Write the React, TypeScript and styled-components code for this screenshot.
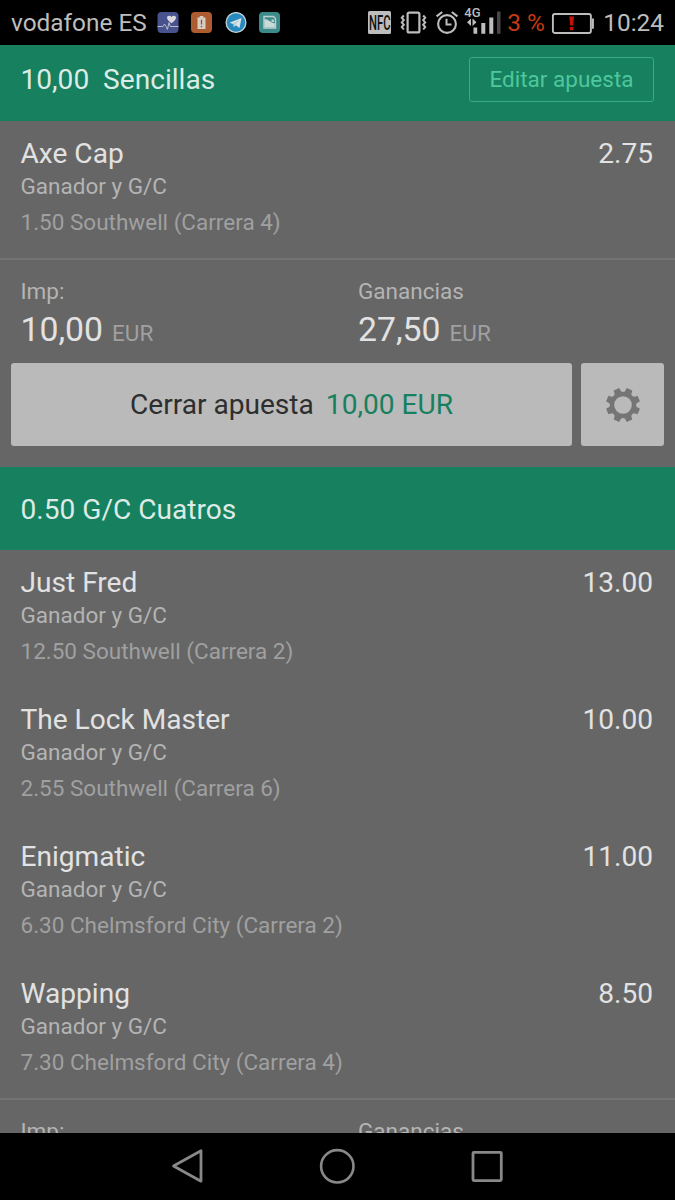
import React from 'react';
import styled, { createGlobalStyle } from 'styled-components';

const GlobalStyle = createGlobalStyle`
  * { box-sizing: border-box; }
  html, body { margin: 0; padding: 0; background: #000; }
  body { font-family: Roboto, "Liberation Sans", sans-serif; overflow: hidden; }
`;

const Screen = styled.div`
  display: flex;
  flex-direction: column;
  width: 675px;
  height: 1200px;
  overflow: hidden;
  background: #666;
`;

const StatusBar = styled.header`
  flex: none;
  display: flex;
  align-items: flex-start;
  justify-content: space-between;
  height: 45px;
  padding: 0 11px;
  background: #000;
  color: #bdbdbd;
`;

const StatusGroup = styled.div`
  display: flex;
  align-items: flex-start;
`;

const StatusText = styled.span<{ $color?: string; $gap?: number }>`
  font-size: 24.4px;
  line-height: 29px;
  margin-top: 8px;
  margin-left: ${(p) => p.$gap ?? 0}px;
  color: ${(p) => p.$color ?? '#bdbdbd'};
  white-space: pre;
`;

const StatusIcon = styled.svg<{ $top: number; $gap: number }>`
  flex: none;
  display: block;
  margin-top: ${(p) => p.$top}px;
  margin-left: ${(p) => p.$gap}px;
`;

const Content = styled.main`
  flex: 1;
  min-height: 0;
  overflow: hidden;
`;

const BetHeader = styled.div<{ $height: number; $top?: number; $bottom?: number }>`
  display: flex;
  align-items: center;
  justify-content: space-between;
  height: ${(p) => p.$height}px;
  padding: ${(p) => p.$top ?? 0}px 21px ${(p) => p.$bottom ?? 0}px 20.5px;
  background: #16805f;
`;

const BetTitle = styled.h2`
  margin: 0;
  font-size: 28.1px;
  line-height: 33px;
  font-weight: 400;
  color: #dcebe6;
  white-space: pre;
`;

const EditButton = styled.button`
  width: 185px;
  height: 45px;
  padding: 0;
  border: 1.5px solid #3aaa84;
  border-radius: 3px;
  background: transparent;
  font-family: inherit;
  font-size: 22.5px;
  line-height: 27px;
  color: #4fc79d;
`;

const Selection = styled.div`
  display: flex;
  justify-content: space-between;
  height: 137px;
  padding: 16px 22px 0 20.5px;
`;

const Name = styled.div`
  font-size: 28.1px;
  line-height: 33px;
  color: #e2e2e2;
`;

const Market = styled.div`
  margin-top: 3px;
  font-size: 22.5px;
  line-height: 27px;
  color: #b4b4b4;
`;

const EventName = styled.div`
  margin-top: 9px;
  font-size: 22.5px;
  line-height: 27px;
  color: #a0a0a0;
`;

const Odds = styled(Name)`
  text-align: right;
`;

const Stakes = styled.div`
  display: grid;
  grid-template-columns: 1fr 1fr;
  height: 105px;
  padding-top: 18px;
  border-top: 2px solid #737373;
`;

const Stake = styled.div`
  padding-left: 20.5px;
`;

const StakeLabel = styled.div`
  font-size: 22.5px;
  line-height: 27px;
  color: #b4b4b4;
`;

const StakeValue = styled.div`
  display: flex;
  align-items: baseline;
  gap: 9px;
  margin-top: 5px;
  font-size: 33.75px;
  line-height: 40px;
  color: #e2e2e2;
`;

const Currency = styled.span`
  font-size: 22.5px;
  color: #a0a0a0;
`;

const Actions = styled.div`
  display: flex;
  gap: 9px;
  height: 104px;
  padding: 0 11px 21px;
`;

const ActionButton = styled.button<{ $width?: number }>`
  display: flex;
  align-items: center;
  justify-content: center;
  gap: 12px;
  flex: ${(p) => (p.$width ? `0 0 ${p.$width}px` : '1')};
  padding: 0;
  border: 0;
  border-radius: 3px;
  background: #bababa;
  font-family: inherit;
  font-size: 28.1px;
  line-height: 33px;
  color: #2e2e2e;
`;

const Amount = styled.span`
  color: #16805f;
`;

const NavBar = styled.nav`
  flex: none;
  display: flex;
  align-items: flex-start;
  justify-content: center;
  gap: 110px;
  height: 67px;
  padding: 13px 1px 0 0;
  background: #000;
`;

interface Pick {
  name: string;
  odds: string;
  event: string;
}

const single: Pick = { name: 'Axe Cap', odds: '2.75', event: '1.50 Southwell (Carrera 4)' };

const fourfold: Pick[] = [
  { name: 'Just Fred', odds: '13.00', event: '12.50 Southwell (Carrera 2)' },
  { name: 'The Lock Master', odds: '10.00', event: '2.55 Southwell (Carrera 6)' },
  { name: 'Enigmatic', odds: '11.00', event: '6.30 Chelmsford City (Carrera 2)' },
  { name: 'Wapping', odds: '8.50', event: '7.30 Chelmsford City (Carrera 4)' },
];

function SelectionRow({ pick }: { pick: Pick }) {
  return (
    <Selection>
      <div>
        <Name>{pick.name}</Name>
        <Market>Ganador y G/C</Market>
        <EventName>{pick.event}</EventName>
      </div>
      <Odds>{pick.odds}</Odds>
    </Selection>
  );
}

function StakeCell({ label, value }: { label: string; value?: string }) {
  return (
    <Stake>
      <StakeLabel>{label}</StakeLabel>
      {value && (
        <StakeValue>
          {value}
          <Currency>EUR</Currency>
        </StakeValue>
      )}
    </Stake>
  );
}

function StakeSummary({ stake, returns }: { stake?: string; returns?: string }) {
  return (
    <Stakes>
      <StakeCell label="Imp:" value={stake} />
      <StakeCell label="Ganancias" value={returns} />
    </Stakes>
  );
}

// Eight teeth separated by rounded notches, around a circular hole.
function gearPath(): string {
  const point = (r: number, deg: number) => {
    const a = (deg * Math.PI) / 180;
    return `${(18 + r * Math.cos(a)).toFixed(2)} ${(18 + r * Math.sin(a)).toFixed(2)}`;
  };
  let d = '';
  for (let i = 0; i < 8; i++) {
    const c = 22.5 + i * 45;
    d += `${i ? 'L' : 'M'}${point(17.3, c - 10)}L${point(17.3, c + 10)}`;
    d += `L${point(15.6, c + 12)}A2.9 2.9 0 0 0 ${point(15.6, c + 33)}`;
  }
  return `${d}ZM18 9.2a8.8 8.8 0 1 0 0 17.6a8.8 8.8 0 1 0 0 -17.6Z`;
}

function GearIcon() {
  return (
    <svg width="36" height="36" viewBox="0 0 36 36">
      <path d={gearPath()} fill="#757575" fillRule="evenodd" />
    </svg>
  );
}

function NotificationIcons() {
  return (
    <>
      <StatusIcon $top={12} $gap={10.5} width="22" height="21" viewBox="0 0 22 21">
        <rect x="0.5" width="21" height="21" rx="4" fill="#48528c" />
        <path d="M14.5 11.2C11 8.8 10 7.2 10 5.6C10 3.4 13.2 2.9 14.5 5.1C15.8 2.9 19 3.4 19 5.6C19 7.2 18 8.8 14.5 11.2Z" fill="#d9d9df" />
        <path d="M0.5 14.5H6L7.5 12L9 14.5L10.4 17.5L12 10.5L13.3 14.5H21.5" fill="none" stroke="#b9bccb" strokeWidth="1" />
      </StatusIcon>
      <StatusIcon $top={12} $gap={12} width="21" height="21" viewBox="0 0 21 21">
        <rect width="21" height="21" rx="4" fill="#ad5b31" />
        <path d="M8.7 4h3.6v1.5h2.2v11.4h-8V5.5h2.2z" fill="#d8cdc5" />
        <path d="M10.5 7.7v4.8M10.5 13.8v1.5" stroke="#95502e" strokeWidth="1.3" />
      </StatusIcon>
      <StatusIcon $top={12} $gap={12.500} width="22" height="22" viewBox="0 0 22 22">
        <circle cx="11" cy="10.5" r="9.9" fill="#2789bd" stroke="#c6d3d9" strokeWidth="1.3" />
        <path d="M4.5 10.7L16.5 6L14.5 16L10.7 13.2L8.9 15L8.2 12Z" fill="#dbe3e7" />
        <path d="M8.2 12L14.3 7.8L9.7 12.5L8.9 15Z" fill="#9dbccc" />
      </StatusIcon>
      <StatusIcon $top={12} $gap={12.500} width="21" height="21" viewBox="0 0 21 21">
        <rect width="21" height="21" rx="4" fill="#3c8a89" />
        <path d="M5 4.5h9.500l2 2V16H5z" fill="none" stroke="#bcd2d1" strokeWidth="1.4" />
        <path d="M5.500 7.500C9 6.500 11 10.800 15.800 11.500V15.300H5.500Z" fill="#cbdad9" />
        <path d="M12.500 7.500h2.500v2.500h-2.500z" fill="#bcd2d1" />
      </StatusIcon>
    </>
  );
}

function SystemIcons() {
  return (
    <>
      <StatusIcon $top={11} $gap={0} width="23" height="23" viewBox="0 0 23 23">
        <rect width="23" height="23" rx="1.5" fill="#bdbdbd" />
        <text x="1" y="18.6" fontFamily="Roboto, sans-serif" fontSize="19.5" fontWeight="500" textLength="21.5" lengthAdjust="spacingAndGlyphs" fill="#111">NFC</text>
      </StatusIcon>
      <StatusIcon $top={11} $gap={9} width="27" height="23" viewBox="0 0 27 23">
        <rect x="7.6" y="1.6" width="11.8" height="19.8" rx="1.5" fill="none" stroke="#bdbdbd" strokeWidth="2.2" />
        <path d="M3.8 4.5L1.8 6.8L3.8 9.1L1.8 11.4L3.8 13.7L1.8 16L3.8 18.5M23.2 4.5L25.2 6.8L23.2 9.1L25.2 11.4L23.2 13.7L25.2 16L23.2 18.5" fill="none" stroke="#bdbdbd" strokeWidth="2" />
      </StatusIcon>
      <StatusIcon $top={10} $gap={8} width="24" height="25" viewBox="0 0 24 25">
        <circle cx="12" cy="14" r="8.9" fill="none" stroke="#bdbdbd" strokeWidth="2.1" />
        <path d="M11.500 8.700V14.500H16.500" fill="none" stroke="#bdbdbd" strokeWidth="2" />
        <path d="M1.600 6.400L7.200 2M16.800 2L22.400 6.400" stroke="#bdbdbd" strokeWidth="2.2" />
      </StatusIcon>
      <StatusIcon $top={6} $gap={5} width="38" height="29" viewBox="0 0 38 29">
        <text x="0.3" y="11.3" fontFamily="Roboto, sans-serif" fontSize="13" fontWeight="500" fill="#bdbdbd">4G</text>
        <path d="M3 16.300L7 12.500V20ZM12.500 16.300L8.500 12.500V20Z" fill="#bdbdbd" />
        <path d="M9.500 21.500h3.700v6.300h-3.700zM17.300 17h4v10.800h-4zM25.300 11.500h4v16.300h-4z" fill="#bdbdbd" />
        <path d="M33 5.500h3.500v22.300H33z" fill="#4a4648" />
      </StatusIcon>
      <StatusText $color="#c63a15" $gap={5.5}>3 %</StatusText>
      <StatusIcon $top={12} $gap={6.5} width="44" height="23" viewBox="0 0 44 23">
        <rect x="1.9" y="2" width="38" height="19" rx="2" fill="none" stroke="#bdbdbd" strokeWidth="1.9" />
        <path d="M41 6.500h1.900v10.200H41z" fill="#bdbdbd" />
        <path d="M18.300 4.500h4.700l-0.900 9h-2.900zM18.900 15h3.500v3.300h-3.500z" fill="#c61109" />
      </StatusIcon>
    </>
  );
}

export default function App() {
  return (
    <>
      <GlobalStyle />
      <Screen>
        <StatusBar>
          <StatusGroup>
            <StatusText>vodafone ES</StatusText>
            <NotificationIcons />
          </StatusGroup>
          <StatusGroup>
            <SystemIcons />
            <StatusText $gap={8}>10:24</StatusText>
          </StatusGroup>
        </StatusBar>

        <Content>
          <BetHeader $height={76} $bottom={7}>
            <BetTitle>10,00  Sencillas</BetTitle>
            <EditButton>Editar apuesta</EditButton>
          </BetHeader>
          <SelectionRow pick={single} />
          <StakeSummary stake="10,00" returns="27,50" />
          <Actions>
            <ActionButton>
              Cerrar apuesta
              <Amount>10,00 EUR</Amount>
            </ActionButton>
            <ActionButton $width={83} aria-label="Ajustes">
              <GearIcon />
            </ActionButton>
          </Actions>

          <BetHeader $height={83} $top={2}>
            <BetTitle>0.50 G/C Cuatros</BetTitle>
          </BetHeader>
          {fourfold.map((pick) => (
            <SelectionRow key={pick.name} pick={pick} />
          ))}
          <StakeSummary />
        </Content>

        <NavBar>
          <svg width="40" height="40" viewBox="0 0 40 40">
            <path d="M34 4.800V35.200L6.500 20Z" fill="none" stroke="#888" strokeWidth="2.8" strokeLinejoin="round" />
          </svg>
          <svg width="40" height="40" viewBox="0 0 40 40">
            <circle cx="20.300" cy="20.300" r="16.2" fill="none" stroke="#888" strokeWidth="2.6" />
          </svg>
          <svg width="40" height="40" viewBox="0 0 40 40">
            <rect x="6" y="6.300" width="28.3" height="28.3" rx="1" fill="none" stroke="#888" strokeWidth="2.8" />
          </svg>
        </NavBar>
      </Screen>
    </>
  );
}
